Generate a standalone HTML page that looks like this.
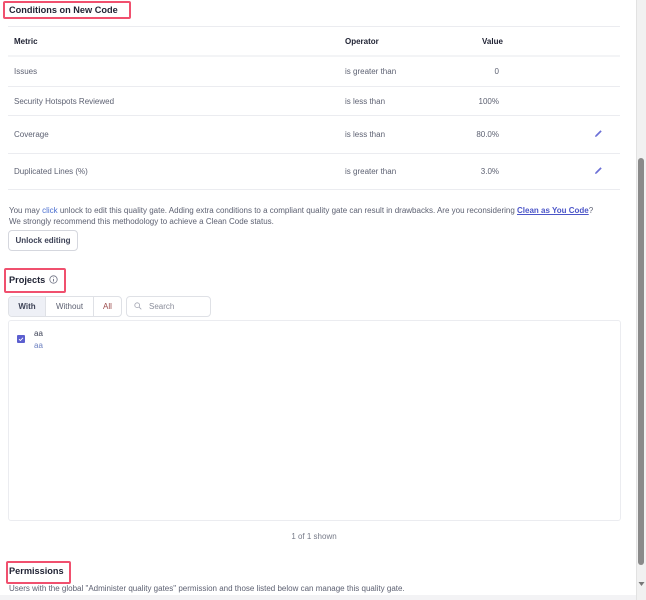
<!DOCTYPE html>
<html><head><style>
*{box-sizing:border-box;margin:0;padding:0}
body{width:646px;height:600px;overflow:hidden;background:#fff;font-family:"Liberation Sans",sans-serif;color:#3e4357;position:relative;font-size:8px}
.a{position:absolute}
.red{position:absolute;border:2px solid #f0506e;border-radius:2px}
.h{font-weight:bold;color:#1f2233;font-size:9.2px}
.line{position:absolute;left:8px;width:612px;height:1px;background:#ebecf0}
.g{color:#5d6172}
</style></head><body>
<div class="red" style="left:3px;top:1px;width:128px;height:18px"></div>
<div class="a h" style="left:9px;top:5px">Conditions on New Code</div>

<div class="line" style="top:26px"></div>
<div class="a h" style="left:14px;top:37px;font-size:8px">Metric</div>
<div class="a h" style="left:345px;top:37px;font-size:8px">Operator</div>
<div class="a h" style="left:482px;top:37px;font-size:8px">Value</div>
<div class="line" style="top:55px;height:2px;background:#f3f4f6"></div>

<div class="a g" style="left:14px;top:67px">Issues</div>
<div class="a g" style="left:345px;top:67px">is greater than</div>
<div class="a g" style="right:147px;top:67px">0</div>
<div class="line" style="top:86px"></div>

<div class="a g" style="left:14px;top:97px">Security Hotspots Reviewed</div>
<div class="a g" style="left:345px;top:97px">is less than</div>
<div class="a g" style="right:147px;top:97px">100%</div>
<div class="line" style="top:115px"></div>

<div class="a g" style="left:14px;top:130px">Coverage</div>
<div class="a g" style="left:345px;top:130px">is less than</div>
<div class="a g" style="right:147px;top:130px">80.0%</div>
<svg class="a" style="left:594px;top:129px" width="9" height="9" viewBox="0 0 9 9"><path d="M1 8 L1.5 6.3 L6.5 1.3 L7.7 2.5 L2.7 7.5 Z" fill="#6b6fd6"/></svg>
<div class="line" style="top:153px"></div>

<div class="a g" style="left:14px;top:167px">Duplicated Lines (%)</div>
<div class="a g" style="left:345px;top:167px">is greater than</div>
<div class="a g" style="right:147px;top:167px">3.0%</div>
<svg class="a" style="left:594px;top:166px" width="9" height="9" viewBox="0 0 9 9"><path d="M1 8 L1.5 6.3 L6.5 1.3 L7.7 2.5 L2.7 7.5 Z" fill="#6b6fd6"/></svg>
<div class="line" style="top:189px"></div>

<div class="a g" style="left:9px;top:205px;line-height:11px;width:625px">You may <span style="color:#4b6fd0">click</span> unlock to edit this quality gate. Adding extra conditions to a compliant quality gate can result in drawbacks. Are you reconsidering <span style="color:#4b55c8;text-decoration:underline;font-weight:bold">Clean as You Code</span>?<br>We strongly recommend this methodology to achieve a Clean Code status.</div>
<div class="a" style="left:8px;top:230px;width:70px;height:21px;border:1px solid #d5d7de;border-radius:4px;font-weight:bold;color:#3e4357;text-align:center;line-height:19px">Unlock editing</div>

<div class="red" style="left:4px;top:268px;width:62px;height:25px"></div>
<div class="a h" style="left:9px;top:275px">Projects</div>
<svg class="a" style="left:49px;top:275px" width="9" height="9" viewBox="0 0 9 9"><circle cx="4.5" cy="4.5" r="3.7" fill="none" stroke="#6b6f80" stroke-width=".8"/><path d="M4.5 4v2.5M4.5 2.6v.5" stroke="#6b6f80" stroke-width=".9"/></svg>

<div class="a" style="left:8px;top:296px;width:114px;height:21px;border:1px solid #dfe1e6;border-radius:4px;overflow:hidden;display:flex;font-size:8px">
<div style="width:37px;background:#eef0f6;border-right:1px solid #dfe1e6;text-align:center;line-height:19px;font-weight:bold;color:#3e4357">With</div>
<div style="width:48px;border-right:1px solid #dfe1e6;text-align:center;line-height:19px" class="g">Without</div>
<div style="flex:1;text-align:center;line-height:19px;color:#9b4a4a">All</div></div>
<div class="a" style="left:126px;top:296px;width:85px;height:21px;border:1px solid #dfe1e6;border-radius:4px"></div>
<svg class="a" style="left:134px;top:302px" width="8" height="8" viewBox="0 0 8 8"><circle cx="3.2" cy="3.2" r="2.4" fill="none" stroke="#a0a3b0" stroke-width=".8"/><path d="M5 5l2.3 2.3" stroke="#a0a3b0" stroke-width=".8"/></svg>
<div class="a" style="left:149px;top:302px;color:#8a8d9a">Search</div>

<div class="a" style="left:8px;top:320px;width:613px;height:201px;border:1px solid #ebecf0;border-radius:3px"></div>
<div class="a" style="left:17px;top:335px;width:8px;height:8px;background:#5c5fcf;border-radius:1px"></div>
<svg class="a" style="left:17px;top:335px" width="8" height="8" viewBox="0 0 8 8"><path d="M2 4.2l1.4 1.3L6 2.8" fill="none" stroke="#fff" stroke-width=".9"/></svg>
<div class="a" style="left:34px;top:329px;color:#3e4357">aa</div>
<div class="a" style="left:34px;top:341px;color:#6b7fc0">aa</div>

<div class="a g" style="left:0;width:628px;text-align:center;top:532px;color:#767a88">1 of 1 shown</div>

<div class="red" style="left:6px;top:561px;width:65px;height:23px"></div>
<div class="a h" style="left:9px;top:566px">Permissions</div>
<div class="a g" style="left:9px;top:584px">Users with the global "Administer quality gates" permission and those listed below can manage this quality gate.</div>
<div class="a" style="left:0;top:595px;width:636px;height:5px;background:#f3f3f5"></div>

<div class="a" style="left:636px;top:0;width:10px;height:600px;background:#f1f1f1;border-left:1px solid #e2e2e2"></div>
<div class="a" style="left:638px;top:158px;width:6px;height:407px;background:#8a8a8a;border-radius:3px"></div>
<svg class="a" style="left:638px;top:581px" width="7" height="6"><path d="M0.5 1h6L3.5 5z" fill="#777"/></svg>
</body></html>
